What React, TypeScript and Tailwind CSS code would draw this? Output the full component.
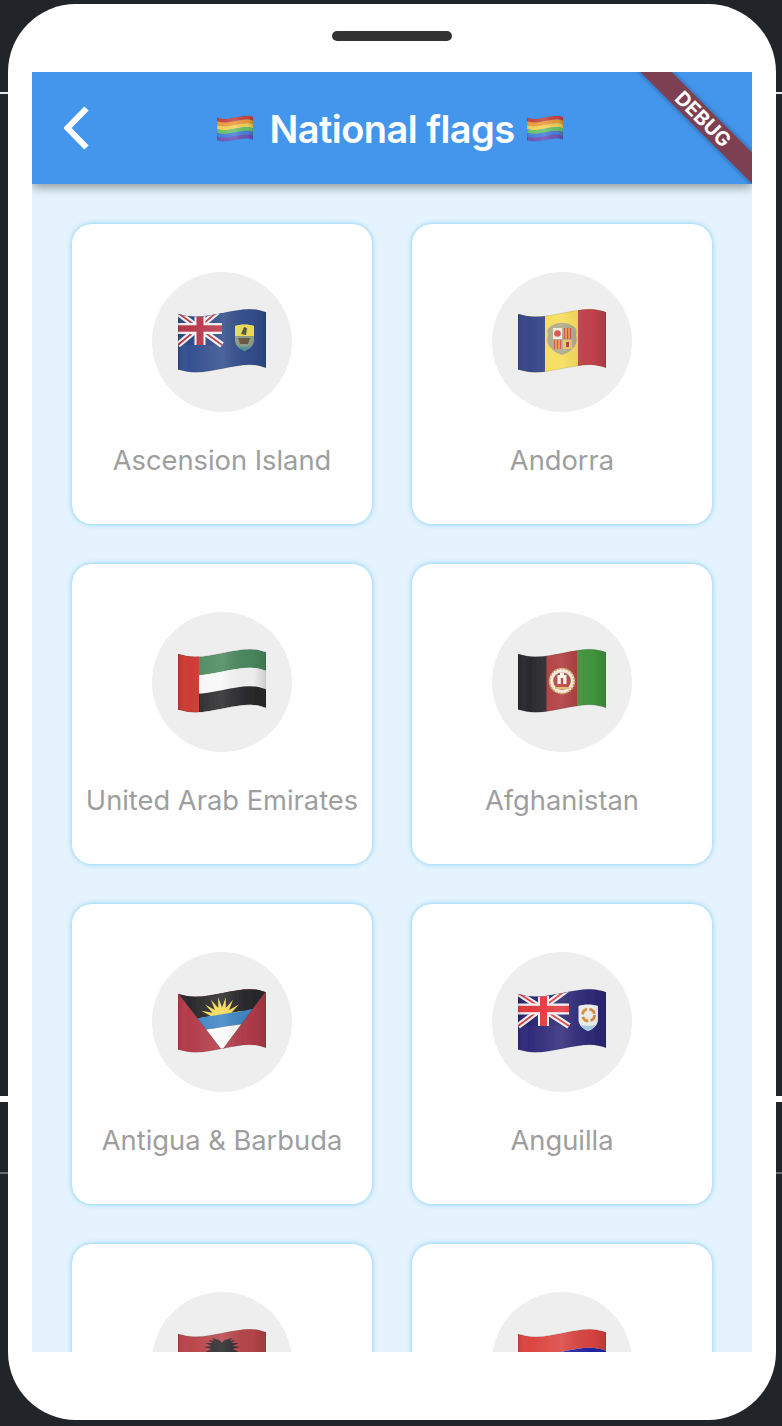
import React from "react";

const top = (d: number) =>
  `M0 ${6 + d}C6 ${7.5 + d} 11 ${8.8 + d} 17 ${8.8 + d}C27 ${8.8 + d} 36 ${6.5 + d} 45 ${5 + d}C55 ${3.2 + d} 63 ${1.3 + d} 72 ${1.3 + d}C78 ${1.3 + d} 83 ${2.7 + d} 88 ${4.3 + d}`;
const band = (a: number, b: number) =>
  `${top(a)}V${4.3 + b}C83 ${2.7 + b} 78 ${1.3 + b} 72 ${1.3 + b}C63 ${1.3 + b} 55 ${3.2 + b} 45 ${5 + b}C36 ${6.5 + b} 27 ${8.8 + b} 17 ${8.8 + b}C11 ${8.8 + b} 6 ${7.5 + b} 0 ${6 + b}Z`;
const H = 55.5;

function Wave({ id, children, w = 88, h = 65, blur = 0.45 }: { id: string; children: React.ReactNode; w?: number; h?: number; blur?: number }) {
  return (
    <svg width={w} height={h} viewBox="0 0 88 65" className="block">
      <defs>
        <clipPath id={`c-${id}`}>
          <path d={band(0, H)} />
        </clipPath>
        <linearGradient id={`g-${id}`} x1="0" x2="1" y1="0" y2="0">
          <stop offset="0" stopColor="#000" stopOpacity="0.1" />
          <stop offset="0.12" stopColor="#fff" stopOpacity="0" />
          <stop offset="0.5" stopColor="#fff" stopOpacity="0.12" />
          <stop offset="0.85" stopColor="#000" stopOpacity="0.04" />
          <stop offset="1" stopColor="#000" stopOpacity="0.16" />
        </linearGradient>
        <filter id={`f-${id}`} x="-5%" y="-5%" width="110%" height="110%">
          <feGaussianBlur stdDeviation={blur} />
        </filter>
      </defs>
      <g filter={`url(#f-${id})`}>
        <g clipPath={`url(#c-${id})`}>
          {children}
          <rect x="0" y="0" width="88" height="65" fill={`url(#g-${id})`} />
        </g>
        <path d={band(0, H)} fill="none" stroke="#000" strokeOpacity="0.14" strokeWidth="0.8" />
      </g>
    </svg>
  );
}

function Jack({ w, h, blue, red }: { w: number; h: number; blue: string; red: string }) {
  const cx = w / 2;
  const cy = h / 2 + 2;
  return (
    <g>
      <rect x="0" y="0" width={w} height={h} fill={blue} />
      <path d={`M0 5L${w} ${h}M${w} 0L0 ${h}`} stroke="#f2f2f4" strokeWidth="6" />
      <path d={`M0 5L${w} ${h}M${w} 0L0 ${h}`} stroke={red} strokeWidth="1.8" />
      <rect x={cx - 5.5} y="0" width="11" height={h} fill="#f2f2f4" />
      <rect x="0" y={cy - 5.5} width={w} height="11" fill="#f2f2f4" />
      <rect x={cx - 3.5} y="0" width="7" height={h} fill={red} />
      <rect x="0" y={cy - 3.2} width={w} height="6.4" fill={red} />
    </g>
  );
}

const Ascension = () => (
  <Wave id="ac">
    <rect width="88" height="65" fill="#33508f" />
    <Jack w={44} h={37} blue="#2f4a85" red="#b8384a" />
    <path d="M57 18C63 16 70 16 76 18V32C76 38 71 41 66.500 43C62 41 57 38 57 32Z" fill="#8fa28a" />
    <path d="M57 18C63 16 70 16 76 18V28H57Z" fill="#f3e25a" />
    <path d="M63 26L66 19L69 20L68 27Z" fill="#5a5a4a" />
    <path d="M60 30H72L70 36H62Z" fill="#6f5a44" />
    <path d="M60 37C64 40 69 40 73 37C71 40 68 42 66.500 43C64 42 62 40 60 37Z" fill="#4b9aa5" />
  </Wave>
);

const Andorra = () => (
  <Wave id="ad">
    <rect width="88" height="65" fill="#f6dc55" />
    <rect width="27" height="65" fill="#38488a" />
    <rect x="60" width="28" height="65" fill="#c8434f" />
    <path d="M35 17C40 14 48 14 53 17C57 19 60 21 58 27C60 33 58 38 55 40C52 44 47 46 44 47C41 46 36 44 33 40C30 38 28 33 30 27C28 21 31 19 35 17Z" fill="#aea685" />
    <rect x="35" y="20" width="9" height="11" fill="#f4eadb" />
    <circle cx="39.500" cy="25.500" r="3.300" fill="#d8453f" />
    <rect x="45" y="20" width="9" height="11" fill="#e5a23c" />
    <path d="M46.500 20V31M49.500 20V31M52.500 20V31" stroke="#c8434f" strokeWidth="1.300" />
    <rect x="35" y="32" width="9" height="9" fill="#e5a23c" />
    <path d="M36.500 32V41M39.500 32V41M42.500 32V41" stroke="#c8434f" strokeWidth="1.300" />
    <rect x="45" y="32" width="9" height="9" fill="#e8c75a" />
    <rect x="48" y="34" width="3" height="5" fill="#a83a3a" />
  </Wave>
);

const Uae = () => (
  <Wave id="ae">
    <path d={band(0, 18.5)} fill="#4b8b60" />
    <path d={band(18.5, 37)} fill="#f7f7f7" />
    <path d={band(37, H)} fill="#2b2b2d" />
    <rect width="21" height="65" fill="#cc3b33" />
  </Wave>
);

const Afghanistan = () => (
  <Wave id="af">
    <rect width="29" height="65" fill="#2a2a2c" />
    <rect x="28.500" width="31" height="65" fill="#ad383a" />
    <rect x="59" width="29" height="65" fill="#449a40" />
    <circle cx="44" cy="33" r="12.800" fill="#f1e9da" />
    <circle cx="44" cy="33" r="12.500" fill="none" stroke="#c8964a" strokeWidth="1.800" strokeDasharray="2 1.400" />
    <circle cx="44" cy="33" r="8.800" fill="#b5403a" />
    <path d="M39.500 36V27H42V24.500H46V27H48.500V36Z" fill="#f7f3ea" />
    <rect x="42.800" y="30" width="2.400" height="6" fill="#a83a3a" />
    <path d="M37 40H51" stroke="#e3b765" strokeWidth="1.800" />
  </Wave>
);

const rays = (() => {
  const pts: string[] = [];
  const n = 9;
  for (let i = 0; i <= 2 * n; i++) {
    const a = Math.PI + (i / (2 * n)) * Math.PI;
    const r = i % 2 === 0 ? 21 : 10.500;
    pts.push(`${(44 + r * Math.cos(a) * 1.05).toFixed(1)},${(30 + r * Math.sin(a)).toFixed(1)}`);
  }
  return pts.join(" ");
})();

const Antigua = () => (
  <Wave id="ag">
    <rect width="88" height="65" fill="#b43c4a" />
    <clipPath id="ag-v">
      <path d="M0 5L44 62L88 3V0H0Z" />
    </clipPath>
    <g clipPath="url(#ag-v)">
      <rect width="88" height="65" fill="#2a2a2d" />
      <polygon points={rays} fill="#f6d955" />
      <path d="M0 36L17 31C35 27 55 26 88 18V33C60 37 40 39 0 47Z" fill="#3f86c6" />
      <path d="M0 47C40 39 60 37 88 33V65H0Z" fill="#fbfbfb" />
    </g>
  </Wave>
);

const Anguilla = () => (
  <Wave id="ai">
    <rect width="88" height="65" fill="#2f2b7a" />
    <Jack w={51} h={38} blue="#2a2670" red="#e4383d" />
    <path d="M60.500 18C66 16 74 16 80 18V32C80 37 75 41 70 43C65 41 60.500 37 60.500 32Z" fill="#f5f5f3" />
    <circle cx="70.500" cy="27" r="6" fill="none" stroke="#df9440" strokeWidth="2.800" strokeDasharray="7 2.500" />
    <path d="M63 37C67 38 74 38 78 37C76 40 73 42 70 43C67 42 65 40 63 37Z" fill="#a9d3ea" />
  </Wave>
);

const Albania = () => (
  <Wave id="al">
    <rect width="88" height="65" fill="#b9464b" />
    <g transform="translate(-22 -1) scale(1.5 1)">
      <path d="M44 16C43 13 40 12 37 11L39 14L35 13L38 16L33 16L37 19L32 20L37 22L33 25L38 25L35 29L40 27L41 30H47L48 27L53 29L50 25L55 25L51 22L56 20L51 19L55 16L50 16L53 13L49 14L51 11C48 12 45 13 44 16Z" fill="#2b2b2d" />
    </g>
  </Wave>
);

const Armenia = () => (
  <Wave id="am">
    <path d={band(0, 18.5)} fill="#dc4540" />
    <path d={band(18.5, 37)} fill="#2425a8" />
    <path d={band(37, H)} fill="#ef9a2e" />
  </Wave>
);

const Rainbow = ({ id }: { id: string }) => {
  const colors = ["#c8473e", "#ee9a3c", "#f3d25a", "#6cc26a", "#4a80d8", "#6f55b8"];
  const step = H / 6;
  return (
    <Wave id={id} w={36} h={27} blur={0.3}>
      {colors.map((c, i) => (
        <path key={c} d={band(i * step - 0.2, (i + 1) * step + 0.2)} fill={c} />
      ))}
    </Wave>
  );
};

const items: { id: string; name?: string; Flag: () => React.ReactElement }[] = [
  { id: "ac", name: "Ascension Island", Flag: Ascension },
  { id: "ad", name: "Andorra", Flag: Andorra },
  { id: "ae", name: "United Arab Emirates", Flag: Uae },
  { id: "af", name: "Afghanistan", Flag: Afghanistan },
  { id: "ag", name: "Antigua & Barbuda", Flag: Antigua },
  { id: "ai", name: "Anguilla", Flag: Anguilla },
  { id: "al", Flag: Albania },
  { id: "am", Flag: Armenia },
];

export default function App() {
  return (
    <div className="relative w-[782px] h-[1426px] overflow-hidden bg-[#212529] pt-1 pl-2 font-['Inter',sans-serif]">
      <div className="absolute left-0 right-0 top-[92px] h-[2px] bg-[#e8e8e8]" />
      <div className="absolute left-0 right-0 top-[1096px] h-[6px] bg-white" />
      <div className="absolute left-0 right-0 top-[1172px] h-[2px] bg-[#6b6e70]" />
      <div className="relative w-[768px] h-[1416px] rounded-[68px] bg-white flex flex-col items-center">
        <div className="mt-[27px] w-[120px] h-[10px] rounded-full bg-[#333333] shrink-0" />
        <div className="mt-[31px] w-[720px] h-[1280px] overflow-hidden bg-[#e4f3fd] flex flex-col">
          <header className="relative shrink-0 h-[112px] bg-[#4496ec] shadow-[0_3px_10px_rgba(0,0,0,0.4)] grid grid-cols-[1fr_auto_1fr] items-center pr-1">
            <div className="pl-8 flex items-center">
              <svg width="26" height="44" viewBox="0 0 26 44" className="block">
                <path d="M22.500 2.500L3.500 22L22.500 41.500" fill="none" stroke="#fff" strokeWidth="6" strokeLinejoin="miter" />
              </svg>
            </div>
            <div className="flex items-center text-white">
              <Rainbow id="r1" />
              <span className="ml-4 mr-3 text-[38px] leading-[44px] font-semibold tracking-[-0.55px] pt-[2px]">National flags</span>
              <Rainbow id="r2" />
            </div>
            <div />
            <div className="absolute inset-0 overflow-hidden">
              <div className="absolute left-[551px] top-[36px] w-[240px] h-[22px] rotate-45 bg-[#7d3f52] shadow-[0_0_6px_rgba(0,0,0,0.35)] flex items-center justify-center text-white text-[20px] leading-none font-bold">
                DEBUG
              </div>
            </div>
          </header>
          <main className="grid grid-cols-[300px_300px] gap-10 pt-10 pl-10">
            {items.map(({ id, name, Flag }) => (
              <div key={id} className="h-[300px] rounded-[20px] bg-white shadow-[0_0_4px_1px_#9ad6f6] flex flex-col items-center pt-12">
                <div className="w-[140px] h-[140px] rounded-full bg-[#eeeeee] flex items-center justify-center shrink-0 pb-[3px]">
                  <Flag />
                </div>
                {name && <div className="mt-[31px] text-[27.3px] leading-[36px] text-[#9e9e9e] whitespace-nowrap">{name}</div>}
              </div>
            ))}
          </main>
        </div>
      </div>
    </div>
  );
}
